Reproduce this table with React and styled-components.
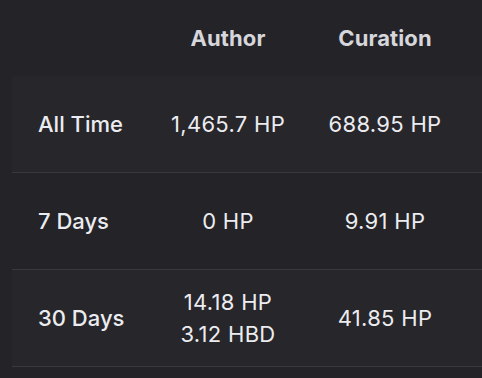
import React from 'react';
import styled, { createGlobalStyle } from 'styled-components';

const GlobalStyle = createGlobalStyle`
  html, body {
    margin: 0;
    padding: 0;
    background: #232328;
  }
  body {
    width: 482px;
    height: 378px;
    overflow: hidden;
    font-family: Inter, "Noto Sans", sans-serif;
    -webkit-font-smoothing: antialiased;
  }
`;

const rows = [
  { label: 'All Time', author: ['1,465.7 HP'], curation: '688.95 HP' },
  { label: '7 Days', author: ['0 HP'], curation: '9.91 HP' },
  { label: '30 Days', author: ['14.18 HP', '3.12 HBD'], curation: '41.85 HP' },
];

const App = () => {
  return (
    <>
      <GlobalStyle />
      <Wrapper>
        <Table>
          <HeadRow>
            <HeadCell />
            <HeadCell>Author</HeadCell>
            <HeadCell>Curation</HeadCell>
            <HeadCell />
          </HeadRow>
          {rows.map((row, i) => (
            <Row key={row.label} $striped={i % 2 === 0}>
              <LabelCell>{row.label}</LabelCell>
              <ValueCell>
                {row.author.map((line) => (
                  <div key={line}>{line}</div>
                ))}
              </ValueCell>
              <ValueCell>{row.curation}</ValueCell>
              <ValueCell />
            </Row>
          ))}
        </Table>
      </Wrapper>
    </>
  );
};

export default App;

const Wrapper = styled.div`
  padding-left: 12px;
  width: 470px;
`;

const Table = styled.div`
  display: flex;
  flex-direction: column;
`;

const HeadRow = styled.div`
  display: grid;
  grid-template-columns: 138px 156px 158px 1fr;
  height: 76px;
  align-items: center;
`;

const HeadCell = styled.div`
  text-align: center;
  font-size: 22px;
  font-weight: 700;
  color: #d6d6db;
  letter-spacing: 0.1px;
`;

const Row = styled.div`
  display: grid;
  grid-template-columns: 138px 156px 158px 1fr;
  height: 96px;
  align-items: center;
  background: ${(p) => (p.$striped ? '#26262b' : 'transparent')};
  border-bottom: 1px solid #38383e;
`;

const LabelCell = styled.div`
  padding-left: 26px;
  font-size: 22px;
  font-weight: 500;
  color: #ececf0;
`;

const ValueCell = styled.div`
  text-align: center;
  font-size: 22px;
  line-height: 32px;
  letter-spacing: 0.3px;
  color: #ececf0;
`;
